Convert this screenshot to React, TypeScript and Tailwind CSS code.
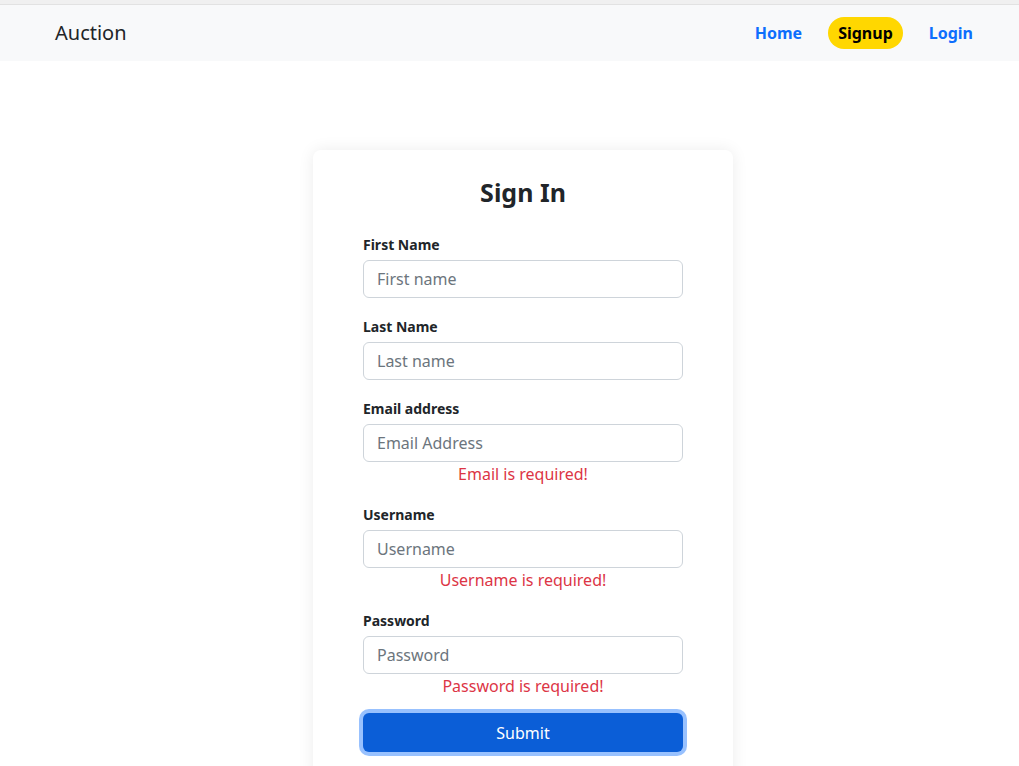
import React from 'react'

const FIELDS = [
  { label: 'First Name', placeholder: 'First name', error: '' },
  { label: 'Last Name', placeholder: 'Last name', error: '' },
  { label: 'Email address', placeholder: 'Email Address', error: 'Email is required!' },
  { label: 'Username', placeholder: 'Username', error: 'Username is required!' },
  { label: 'Password', placeholder: 'Password', error: 'Password is required!' },
]

export default function App() {
  return (
    <div className="min-h-screen bg-white text-[#212529]" style={{ fontFamily: '"Noto Sans", "Open Sans", sans-serif' }}>
      <div className="h-[4px] bg-[#f0f0f0]" />
      <nav className="flex h-[57px] items-center justify-between border-t border-[#e2e2e2] bg-[#f8f9fa] pl-[55px] pr-[36px]">
        <span className="text-[20px] leading-[30px]">Auction</span>
        <div className="flex items-center gap-[16px] text-[16px] font-bold">
          <a className="rounded-full px-[10px] py-[4px] text-[#0d6efd]">Home</a>
          <a className="rounded-full bg-[#ffd700] px-[10px] py-[4px] text-black">Signup</a>
          <a className="rounded-full px-[10px] py-[4px] text-[#0d6efd]">Login</a>
        </div>
      </nav>

      <div className="flex justify-center pl-[27px] pt-[89px]">
        <div className="w-[420px] rounded-[8px] bg-white px-[50px] pt-[27px] pb-[30px] shadow-[0_0_16px_rgba(0,0,0,0.08)]">
          <h2 className="text-center text-[25px] font-bold leading-[30px]">Sign In</h2>
          <form className="mt-[27px]">
            {FIELDS.map((f) => (
              <div key={f.label} className="mb-[18px]">
                <label className="mb-[5px] block text-[14px] font-bold leading-[21px]">{f.label}</label>
                <input
                  placeholder={f.placeholder}
                  className="block h-[38px] w-full rounded-[6px] border border-[#ced4da] px-[13px] text-[16px] text-[#212529] outline-none placeholder:text-[#6c757d]"
                />
                {f.error && (
                  <div className="text-center text-[16px] leading-[24px] text-[#dc3545]">{f.error}</div>
                )}
              </div>
            ))}
            <button
              type="button"
              className="mt-[-3px] block h-[39px] w-full rounded-[6px] bg-[#0b5ed7] text-[16px] text-white shadow-[0_0_0_4px_rgba(49,132,253,0.5)]"
            >
              Submit
            </button>
          </form>
        </div>
      </div>
    </div>
  )
}
